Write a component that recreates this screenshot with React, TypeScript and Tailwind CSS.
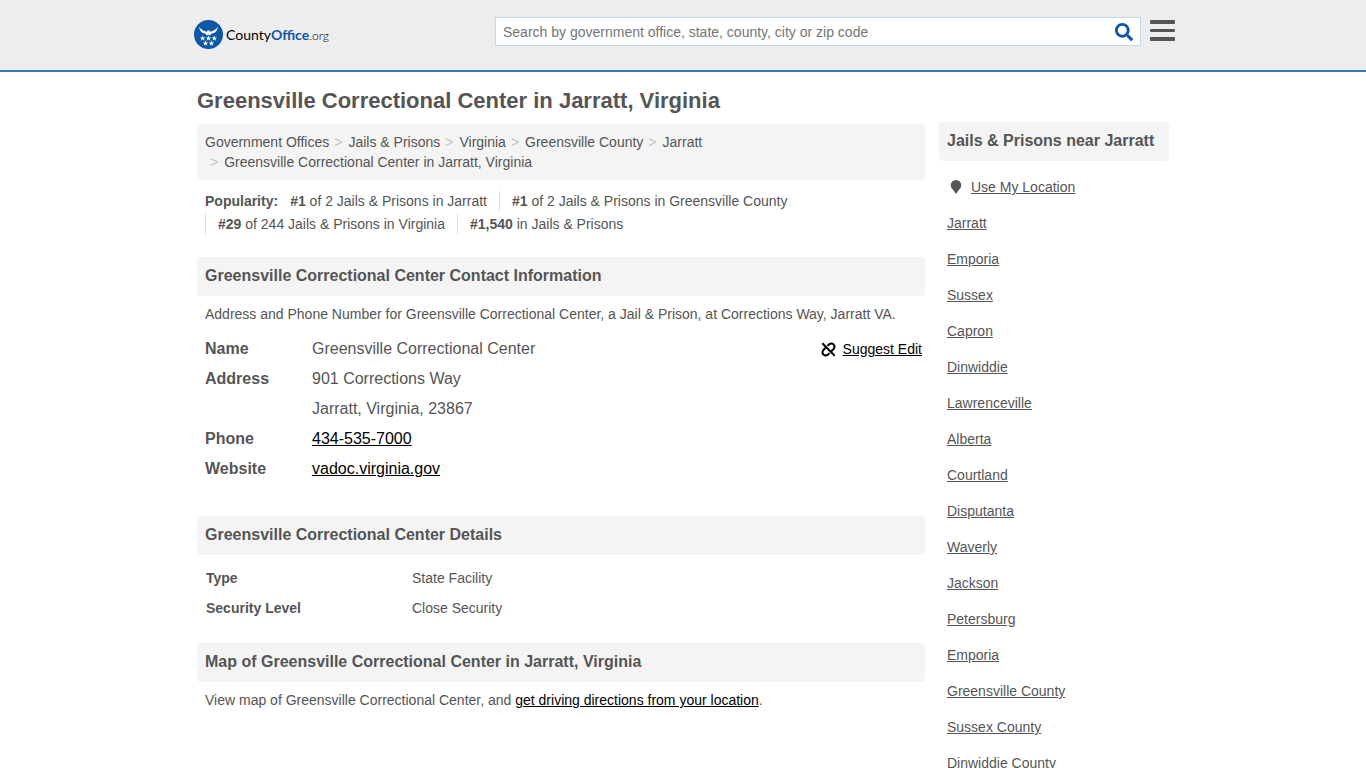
import type { ReactNode } from "react";
import { FaSearch } from "react-icons/fa";

const breadcrumbs = [
  "Government Offices",
  "Jails & Prisons",
  "Virginia",
  "Greensville County",
  "Jarratt",
  "Greensville Correctional Center in Jarratt, Virginia",
];

const rankings = [
  { rank: "#1", scope: "of 2 Jails & Prisons in Jarratt" },
  { rank: "#1", scope: "of 2 Jails & Prisons in Greensville County" },
  { rank: "#29", scope: "of 244 Jails & Prisons in Virginia" },
  { rank: "#1,540", scope: "in Jails & Prisons" },
];

const nearby = [
  "Jarratt",
  "Emporia",
  "Sussex",
  "Capron",
  "Dinwiddie",
  "Lawrenceville",
  "Alberta",
  "Courtland",
  "Disputanta",
  "Waverly",
  "Jackson",
  "Petersburg",
  "Emporia",
  "Greensville County",
  "Sussex County",
  "Dinwiddie County",
];

const STAR = "M0-2.8.8-.9 2.8-.9 1.2.4 1.8 2.4 0 1.2-1.8 2.4-1.2.4-2.8-.9-.8-.9Z";

function Logo() {
  const stars = [
    [8.7, 18.3],
    [14.5, 18.3],
    [20.3, 18.3],
    [11.5, 23.400],
    [17.5, 23.400],
  ];
  return (
    <a href="#home" className="flex shrink-0 items-center gap-[3px] font-[Lato,sans-serif] text-sm leading-5 text-black">
      <svg viewBox="0 0 29 29" className="size-[29px]" aria-hidden="true">
        <circle cx="14.5" cy="14.5" r="14.5" fill="#0d57a6" />
        <path
          fill="#f4f8fc"
          d="M5.200 6.800C7 9.700 9.800 11 12.400 11.700L13.600 10.400 15.300 10.300 16.200 11.700C19 11 22 9.700 23.800 6.800 23.700 9.200 23 10.800 21.500 12 20.400 13 19 13.400 17.600 13.600L16.300 15.500 14.500 14.800 12.700 15.500 11.400 13.600C10 13.400 8.600 13 7.500 12 6 10.800 5.300 9.200 5.200 6.800Z"
        />
        {stars.map(([x, y]) => (
          <path key={`${x}-${y}`} transform={`translate(${x} ${y})`} d={STAR} fill="#f4f8fc" />
        ))}
      </svg>
      <span>
        County<b className="text-[#0d57a6]">Office</b>
        <span className="text-xs font-light">.org</span>
      </span>
    </a>
  );
}

function SectionHeading({ children }: { children: ReactNode }) {
  return (
    <h2 className="rounded-[4px] bg-[#f4f4f4] px-2 pt-[7px] pb-2 text-base leading-6 font-bold">{children}</h2>
  );
}

function UnlinkIcon() {
  return (
    <svg viewBox="0 0 15 15" className="size-[15px]" fill="none" stroke="currentColor" strokeWidth="2" aria-hidden="true">
      <path d="M1.300 1.300l12.400 12.400" />
      <path d="M6.500 3.800L8 2.400Q10.500.6 12.600 2.400 14.400 4.500 12.600 7L9 10.400" />
      <path d="M8.500 11.200L7 12.600Q4.500 14.400 2.400 12.600.6 10.500 2.400 8L6 4.600" />
    </svg>
  );
}

function ContactRow({ label, children }: { label: string; children: ReactNode }) {
  return (
    <div className="flex">
      <dt className="w-[107px] shrink-0 font-bold">{label}</dt>
      <dd>{children}</dd>
    </div>
  );
}

export default function App() {
  return (
    <div className="bg-white font-['Liberation_Sans',Arial,sans-serif] text-sm leading-5 text-[#555]">
      <header className="border-b-2 border-[#3b7ab0] bg-[#ededed]">
        <div className="mx-auto flex h-[70px] max-w-[984px] items-start pl-[3px]">
          <div className="pt-5">
            <Logo />
          </div>
          <form role="search" className="mt-[17px] ml-auto flex h-[29px] w-[646px] items-center border border-[#c3d9ea] bg-white">
            <input
              type="search"
              aria-label="Search"
              placeholder="Search by government office, state, county, city or zip code"
              className="min-w-0 flex-1 px-[7px] outline-none placeholder:text-[#757575]"
            />
            <button type="button" aria-label="Submit search" className="px-[7px] text-[#0f56a3]">
              <FaSearch className="size-[18px]" />
            </button>
          </form>
          <button type="button" aria-label="Menu" className="mt-5 ml-[9px] flex w-[25px] flex-col gap-[5px]">
            <span className="h-1 w-full rounded-[1px] bg-[#555]" />
            <span className="h-[3px] w-full rounded-[1px] bg-[#555]" />
            <span className="h-1 w-full rounded-[1px] bg-[#555]" />
          </button>
        </div>
      </header>

      <div className="mx-auto flex max-w-[972px] items-start gap-3.5">
        <main className="min-w-0 flex-1 pb-16">
          <h1 className="pt-[15px] pb-[9px] text-[22px] leading-7 font-bold">Greensville Correctional Center in Jarratt, Virginia</h1>

          <nav aria-label="Breadcrumb" className="rounded-[4px] bg-[#f4f4f4] p-2">
            <ol className="flex flex-wrap">
              {breadcrumbs.map((crumb, i) => (
                <li key={crumb}>
                  {i > 0 && <span className="pr-1.5 pl-[5px] text-[#c4c4c4]">&gt;</span>}
                  <a href="#crumb">{crumb}</a>
                </li>
              ))}
            </ol>
          </nav>

          <div className="mt-[11px] flex flex-wrap gap-y-[3px] px-2">
            <strong className="pr-3">Popularity:</strong>
            {rankings.map(({ rank, scope }, i) => (
              <span key={scope} className={i > 0 ? "border-l border-[#ddd] px-3" : "pr-3"}>
                <b>{rank}</b> {scope}
              </span>
            ))}
          </div>

          <section className="mt-[23px]">
            <SectionHeading>Greensville Correctional Center Contact Information</SectionHeading>
            <p className="mt-2 px-2">
              Address and Phone Number for Greensville Correctional Center, a Jail &amp; Prison, at Corrections Way, Jarratt VA.
            </p>
            <div className="mt-2.5 flex justify-between pr-[3px] pl-2">
              <dl className="text-base leading-[30px]">
                <ContactRow label="Name">Greensville Correctional Center</ContactRow>
                <ContactRow label="Address">
                  901 Corrections Way
                  <br />
                  Jarratt, Virginia, 23867
                </ContactRow>
                <ContactRow label="Phone">
                  <a href="tel:434-535-7000" className="text-black underline">434-535-7000</a>
                </ContactRow>
                <ContactRow label="Website">
                  <a href="#website" className="text-black underline">vadoc.virginia.gov</a>
                </ContactRow>
              </dl>
              <a href="#edit" className="flex items-center gap-[7px] self-start leading-[30px] text-black">
                <UnlinkIcon />
                <span className="underline">Suggest Edit</span>
              </a>
            </div>
          </section>

          <section className="mt-8">
            <SectionHeading>Greensville Correctional Center Details</SectionHeading>
            <table className="mt-2 ml-[9px] text-left leading-[30px]">
              <tbody>
                <tr>
                  <th scope="row" className="w-[206px] font-bold">Type</th>
                  <td>State Facility</td>
                </tr>
                <tr>
                  <th scope="row" className="font-bold">Security Level</th>
                  <td>Close Security</td>
                </tr>
              </tbody>
            </table>
          </section>

          <section className="mt-5">
            <SectionHeading>Map of Greensville Correctional Center in Jarratt, Virginia</SectionHeading>
            <p className="mt-2 px-2">
              View map of Greensville Correctional Center, and{" "}
              <a href="#directions" className="text-black underline">get driving directions from your location</a>.
            </p>
          </section>
        </main>

        <aside className="w-[230px] shrink-0 pt-[50px]">
          <SectionHeading>Jails &amp; Prisons near Jarratt</SectionHeading>
          <ul className="mt-2 px-2 leading-9">
            <li>
              <a href="#location" className="flex items-center gap-[9px] pl-[3px]">
                <svg viewBox="0 0 12 14" className="h-3.5 w-3" fill="currentColor" aria-hidden="true">
                  <path d="M6 0a5.300 5.300 0 0 1 5.300 5.300c0 2.500-2 4-3.400 6L6 14l-1.900-2.700C2.700 9.300.7 7.800.7 5.300A5.300 5.300 0 0 1 6 0Z" />
                </svg>
                <span className="underline">Use My Location</span>
              </a>
            </li>
            {nearby.map((place, i) => (
              <li key={i}>
                <a href="#place" className="underline">{place}</a>
              </li>
            ))}
          </ul>
        </aside>
      </div>
    </div>
  );
}
